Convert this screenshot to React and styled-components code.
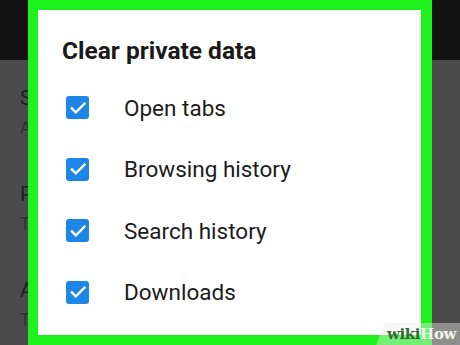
import React from "react";
import styled, { createGlobalStyle } from "styled-components";

const GlobalStyle = createGlobalStyle`
  html, body {
    margin: 0;
    padding: 0;
    background: #4b4b4b;
  }
  body {
    font-family: Roboto, "Noto Sans", Arial, sans-serif;
  }
`;

const Screen = styled.div`
  position: relative;
  width: 460px;
  height: 345px;
  overflow: hidden;
  background: #4b4b4b;
`;

const TopBar = styled.div`
  height: 60px;
  background: #121212;
`;

// only the first letters peek out from behind the dialog
const SettingsList = styled.div`
  display: flex;
  flex-direction: column;
  width: 28px;
  overflow: hidden;
  padding: 24px 0 0 20px;
  gap: 22px;
`;

const SettingItem = styled.div`
  display: flex;
  flex-direction: column;
  gap: 3px;
  height: 74px;
`;

const SettingTitle = styled.div`
  font-size: 21px;
  line-height: 28px;
  color: #1e1e1e;
  white-space: nowrap;
`;

const SettingSub = styled.div`
  font-size: 17px;
  line-height: 24px;
  color: #2e2e2e;
  white-space: nowrap;
`;

const Highlight = styled.div`
  position: absolute;
  left: 28px;
  top: 0;
  width: 404px;
  height: 345px;
  box-sizing: border-box;
  background: #1df21d;
  padding: 10px 11px 10px 10px;
`;

const Dialog = styled.div`
  height: 100%;
  background: #ffffff;
  padding: 26px 0 0 24px;
  box-sizing: border-box;
`;

const DialogTitle = styled.h2`
  margin: 0 0 30px 0;
  font-size: 24.5px;
  line-height: 30px;
  font-weight: 700;
  color: #1a1a1a;
`;

const OptionList = styled.div`
  display: flex;
  flex-direction: column;
  gap: 38.5px;
`;

const Option = styled.label`
  display: flex;
  align-items: center;
  height: 23px;
  gap: 35px;
  padding-left: 4px;
`;

const Box = styled.span`
  width: 23px;
  height: 23px;
  border-radius: 3px;
  background: #1e86e6;
  display: flex;
  align-items: center;
  justify-content: center;
  flex-shrink: 0;
`;

const OptionText = styled.span`
  font-size: 22.5px;
  color: #1c1c1c;
`;

const Badge = styled.div`
  position: absolute;
  right: 0;
  bottom: 0;
  width: 84px;
  height: 22px;
  background: rgba(235, 235, 235, 0.42);
  clip-path: polygon(9px 0, 100% 0, 100% 100%, 0 100%);
  display: flex;
  align-items: center;
  padding-left: 11px;
  box-sizing: border-box;
  font-family: "DejaVu Serif", "Liberation Serif", serif;
  font-weight: 700;
  font-size: 15px;
  letter-spacing: -0.4px;
`;

const Wiki = styled.span`
  color: #2f6a32;
`;

const How = styled.span`
  color: #f2f7ee;
`;

const Check = () => (
  <svg width="18" height="18" viewBox="0 0 24 24">
    <path
      d="M3.8 12.6l5.3 5.1L20.6 6.4"
      fill="none"
      stroke="#fff"
      strokeWidth="3.2"
      strokeLinecap="square"
    />
  </svg>
);

const settings = [
  { title: "Search", sub: "Add, set default, show suggestions" },
  { title: "Privacy", sub: "Tracking, logins, data choices" },
  { title: "Accessibility", sub: "Text size, zoom, voice input" },
];

const options = ["Open tabs", "Browsing history", "Search history", "Downloads"];

export default function App() {
  return (
    <Screen>
      <GlobalStyle />
      <TopBar />
      <SettingsList>
        {settings.map((s) => (
          <SettingItem key={s.title}>
            <SettingTitle>{s.title}</SettingTitle>
            <SettingSub>{s.sub}</SettingSub>
          </SettingItem>
        ))}
      </SettingsList>
      <Highlight>
        <Dialog>
          <DialogTitle>Clear private data</DialogTitle>
          <OptionList>
            {options.map((o) => (
              <Option key={o}>
                <Box>
                  <Check />
                </Box>
                <OptionText>{o}</OptionText>
              </Option>
            ))}
          </OptionList>
        </Dialog>
      </Highlight>
      <Badge>
        <Wiki>wiki</Wiki>
        <How>How</How>
      </Badge>
    </Screen>
  );
}
